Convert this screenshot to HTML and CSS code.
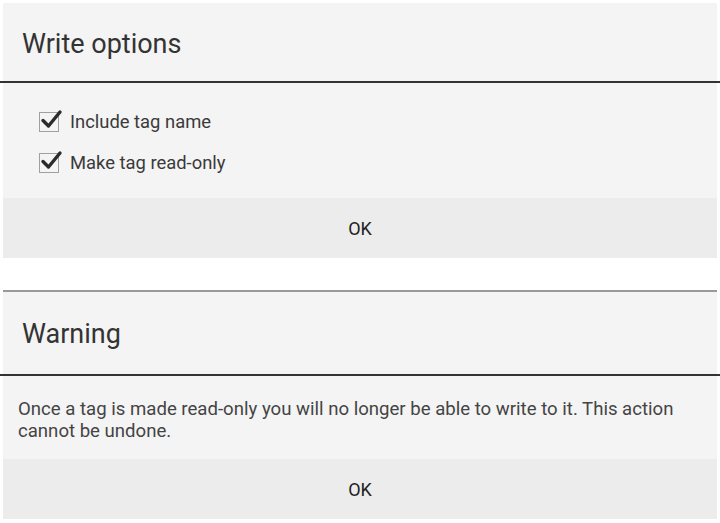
FILE: index.html
```html
<!DOCTYPE html>
<html lang="en">
<head>
    <meta charset="UTF-8">
    <meta name="viewport" content="width=device-width, initial-scale=1.0">
    <title>Write options</title>
    <link rel="stylesheet" href="styles.css">
</head>
<body>
    <!-- write options dialog -->
    <div class="dialog dialog-options">
        <h2 class="dialog-title">Write options</h2>
        <div class="divider"></div>
        <div class="dialog-body options-body">
            <label class="check-row">
                <span class="check-box">
                    <svg viewBox="0 0 24 24" width="24" height="24">
                        <path d="M4 12.5 L9.5 18 L21 4" fill="none" stroke="#2b2b2b" stroke-width="3.4" stroke-linecap="round" stroke-linejoin="round"/>
                    </svg>
                </span>
                <span class="check-label">Include tag name</span>
            </label>
            <label class="check-row">
                <span class="check-box">
                    <svg viewBox="0 0 24 24" width="24" height="24">
                        <path d="M4 12.5 L9.5 18 L21 4" fill="none" stroke="#2b2b2b" stroke-width="3.4" stroke-linecap="round" stroke-linejoin="round"/>
                    </svg>
                </span>
                <span class="check-label">Make tag read-only</span>
            </label>
        </div>
        <div class="dialog-buttons">
            <button class="dialog-btn">OK</button>
        </div>
    </div>

    <!-- warning dialog -->
    <div class="dialog dialog-warning">
        <h2 class="dialog-title">Warning</h2>
        <div class="divider"></div>
        <div class="dialog-body warning-body">
            <p class="dialog-text">Once a tag is made read-only you will no longer be able to write to it. This action cannot be undone.</p>
        </div>
        <div class="dialog-buttons">
            <button class="dialog-btn">OK</button>
        </div>
    </div>
</body>
</html>
```

FILE: styles.css
```css
:root {
    --panel-color: #f4f4f4;
    --button-bar-color: #ececec;
    --text-color: #333333;
    --divider-color: #333333;
}

* {
    margin: 0;
    padding: 0;
    box-sizing: border-box;
}

body {
    font-family: Roboto, 'Noto Sans', sans-serif;
    background-color: #ffffff;
    color: var(--text-color);
}

.dialog {
    margin: 3px 3px 0;
    background-color: var(--panel-color);
}

.dialog-warning {
    margin-top: 32px;
    border-top: 2px solid #999999;
}

.dialog-title {
    display: flex;
    align-items: center;
    height: 78px;
    padding: 3px 19px 0;
    font-size: 27px;
    font-weight: 400;
    color: #333333;
}

.dialog-warning .dialog-title {
    height: 82px;
    padding-top: 1px;
}

.divider {
    height: 2px;
    margin: 0 -3px;
    background-color: var(--divider-color);
}

.options-body {
    padding: 18px 0 15px 36px;
}

.check-row {
    display: flex;
    align-items: center;
    height: 41px;
}

.check-box {
    position: relative;
    width: 20px;
    height: 20px;
    border: 1.5px solid #a0a0a0;
    margin-right: 11px;
}

.check-box svg {
    position: absolute;
    left: -1px;
    top: -5px;
}

.check-label {
    font-size: 18.4px;
    color: #3a3a3a;
}

.warning-body {
    padding: 22px 15px 17px;
}

.dialog-text {
    font-size: 18.6px;
    line-height: 22px;
    color: #444444;
}

.dialog-buttons {
    display: flex;
    justify-content: center;
    align-items: center;
    height: 60px;
    background-color: var(--button-bar-color);
}

.dialog-btn {
    font-family: inherit;
    font-size: 18px;
    color: #222222;
    background: none;
    border: none;
    padding: 0 20px;
}
```
